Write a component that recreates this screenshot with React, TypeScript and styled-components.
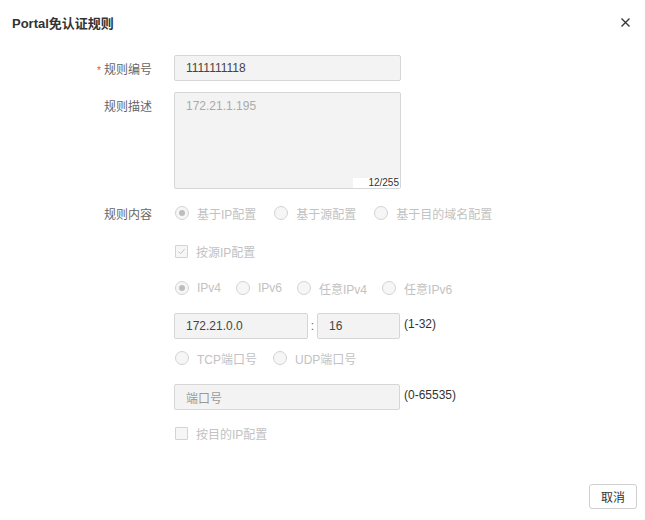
import React from "react";
import styled, { createGlobalStyle } from "styled-components";

const Global = createGlobalStyle`
  html, body { margin: 0; padding: 0; background: #fff; }
  body { font-family: "Liberation Sans", Arial, "Noto Sans CJK SC", sans-serif; font-size: 12px; color: #333; }
  * { box-sizing: border-box; }
`;

const Dialog = styled.div`
  width: 645px;
  height: 520px;
  display: flex;
  flex-direction: column;
  background: #fff;
`;

const Header = styled.div`
  height: 44px;
  display: flex;
  align-items: center;
  justify-content: space-between;
  padding: 0 14px 0 12px;
`;

const Title = styled.div`
  font-size: 13px;
  font-weight: bold;
  color: #333;
`;

const Close = styled.button`
  width: 12px;
  height: 12px;
  padding: 0;
  border: 0;
  background: transparent;
  display: flex;
  align-items: center;
  justify-content: center;
`;

const Form = styled.div`
  display: flex;
  flex-direction: column;
  flex: 1;
`;

const Row = styled.div<{ $mt: number; $h?: number }>`
  display: grid;
  grid-template-columns: 152px 1fr;
  column-gap: 22px;
  margin-top: ${(p) => p.$mt}px;
  min-height: ${(p) => p.$h ?? 26}px;
  align-items: ${(p) => (p.$h && p.$h > 30 ? "start" : "center")};
`;

const Label = styled.div<{ $top?: boolean }>`
  text-align: right;
  color: #666;
  font-size: 12px;
  align-self: ${(p) => (p.$top ? "start" : "center")};
  padding-top: ${(p) => (p.$top ? "5px" : "0")};
`;

const Star = styled.span`
  color: #e0504a;
  margin-right: 3px;
  font-size: 10px;
`;

const Field = styled.div`
  display: flex;
  align-items: center;
`;

const Input = styled.div<{ $w: number; $tone?: "dark" | "light" | "placeholder" }>`
  width: ${(p) => p.$w}px;
  height: 26px;
  border: 1px solid #d6d6d6;
  border-radius: 2px;
  background: #f3f3f3;
  padding: 0 11px;
  display: flex;
  align-items: center;
  font-size: 12px;
  color: ${(p) => (p.$tone === "light" ? "#aaa" : p.$tone === "placeholder" ? "#999" : "#444")};
`;

const TextArea = styled.div`
  position: relative;
  width: 227px;
  height: 97px;
  border: 1px solid #d6d6d6;
  border-radius: 2px;
  background: #f3f3f3;
  padding: 6px 11px;
  font-size: 12px;
  color: #aaa;
`;

const Counter = styled.span`
  position: absolute;
  right: 0;
  bottom: 0;
  width: 47px;
  height: 10px;
  background: #fff;
  font-size: 10px;
  line-height: 10px;
  color: #333;
  text-align: right;
  padding-right: 1px;
`;

const Colon = styled.span`
  width: 9px;
  text-align: center;
  color: #666;
`;

const Hint = styled.span`
  margin-left: 4px;
  color: #333;
  font-size: 12px;
  align-self: flex-start;
  margin-top: 4px;
`;

const Options = styled.div<{ $gap?: number }>`
  display: flex;
  align-items: center;
  gap: ${(p) => p.$gap ?? 17}px;
`;

const Option = styled.span`
  display: inline-flex;
  align-items: center;
  gap: 8px;
  color: #c2c2c2;
  font-size: 12px;
`;

const RadioDot = styled.span<{ $on?: boolean }>`
  position: relative;
  width: 14px;
  height: 14px;
  border-radius: 50%;
  border: 1px solid #d3d3d3;
  background: #f6f6f6;
  display: inline-flex;
  align-items: center;
  justify-content: center;
  margin-left: 1px;
  &::after {
    content: "";
    width: 6px;
    height: 6px;
    border-radius: 50%;
    background: ${(p) => (p.$on ? "#bdbdbd" : "transparent")};
  }
`;

const Box = styled.span`
  width: 13px;
  height: 13px;
  border: 1px solid #d3d3d3;
  border-radius: 1px;
  background: #f6f6f6;
  display: inline-flex;
  align-items: center;
  justify-content: center;
  margin-left: 1px;
`;

const Footer = styled.div`
  display: flex;
  justify-content: flex-end;
  padding: 0 8px 11px 0;
`;

const Button = styled.button`
  width: 48px;
  height: 25px;
  border: 1px solid #cfcfcf;
  border-radius: 3px;
  background: #fff;
  font-family: inherit;
  font-size: 12px;
  color: #333;
  padding: 0;
`;

const Radio = ({ on, children }: { on?: boolean; children: React.ReactNode }) => (
  <Option>
    <RadioDot $on={on} />
    {children}
  </Option>
);

const Check = ({ on, children }: { on?: boolean; children: React.ReactNode }) => (
  <Option>
    <Box>
      {on && (
        <svg width="9" height="9" viewBox="0 0 9 9">
          <path d="M1.5 4.6 L3.7 6.6 L7.6 2.2" fill="none" stroke="#c4c4c4" strokeWidth="1" />
        </svg>
      )}
    </Box>
    {children}
  </Option>
);

export default function App() {
  return (
    <>
      <Global />
      <Dialog>
        <Header>
          <Title>Portal免认证规则</Title>
          <Close aria-label="close">
            <svg width="9" height="9" viewBox="0 0 9 9">
              <path d="M0.5 0.5 L8.5 8.5 M8.5 0.5 L0.5 8.5" stroke="#333" strokeWidth="1.3" />
            </svg>
          </Close>
        </Header>
        <Form>
          <Row $mt={11}>
            <Label>
              <Star>*</Star>规则编号
            </Label>
            <Field>
              <Input $w={227}>1111111118</Input>
            </Field>
          </Row>
          <Row $mt={11} $h={97}>
            <Label $top>规则描述</Label>
            <Field>
              <TextArea>
                172.21.1.195
                <Counter>12/255</Counter>
              </TextArea>
            </Field>
          </Row>
          <Row $mt={11}>
            <Label>规则内容</Label>
            <Options>
              <Radio on>基于IP配置</Radio>
              <Radio>基于源配置</Radio>
              <Radio>基于目的域名配置</Radio>
            </Options>
          </Row>
          <Row $mt={12}>
            <span />
            <Options>
              <Check on>按源IP配置</Check>
            </Options>
          </Row>
          <Row $mt={11}>
            <span />
            <Options $gap={14}>
              <Radio on>IPv4</Radio>
              <Radio>IPv6</Radio>
              <Radio>任意IPv4</Radio>
              <Radio>任意IPv6</Radio>
            </Options>
          </Row>
          <Row $mt={12}>
            <span />
            <Field>
              <Input $w={134}>172.21.0.0</Input>
              <Colon>:</Colon>
              <Input $w={83}>16</Input>
              <Hint>(1-32)</Hint>
            </Field>
          </Row>
          <Row $mt={6}>
            <span />
            <Options $gap={15}>
              <Radio>TCP端口号</Radio>
              <Radio>UDP端口号</Radio>
            </Options>
          </Row>
          <Row $mt={13}>
            <span />
            <Field>
              <Input $w={226} $tone="placeholder">端口号</Input>
              <Hint>(0-65535)</Hint>
            </Field>
          </Row>
          <Row $mt={10}>
            <span />
            <Options>
              <Check>按目的IP配置</Check>
            </Options>
          </Row>
        </Form>
        <Footer>
          <Button>取消</Button>
        </Footer>
      </Dialog>
    </>
  );
}
